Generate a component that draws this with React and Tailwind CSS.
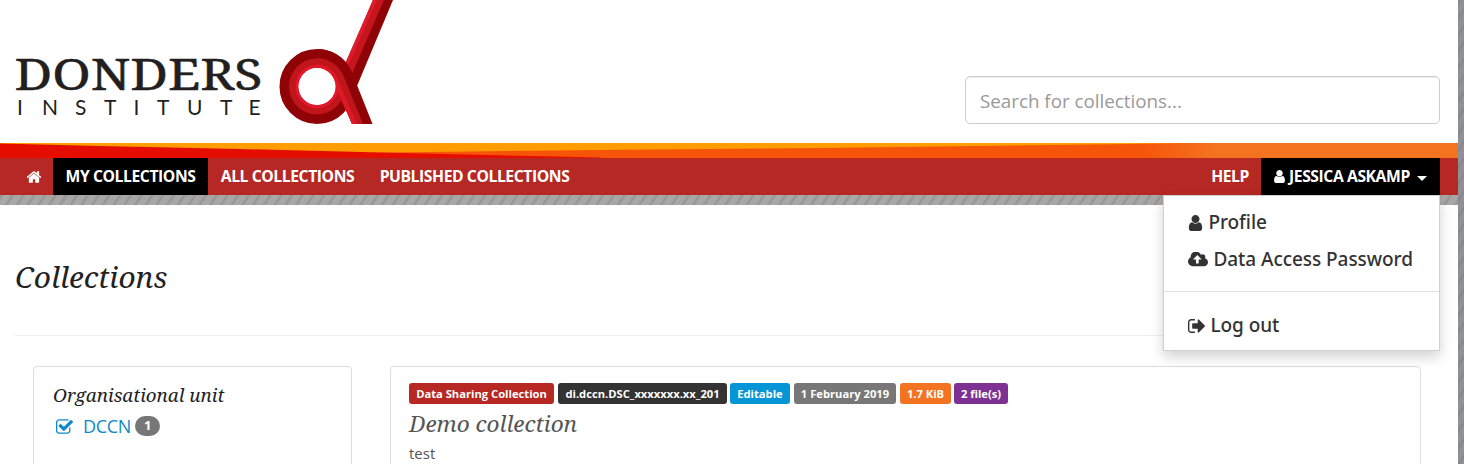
const iconPaths = {
  home: {
    box: '0 0 1792 1792',
    d: 'M1472 992v480q0 26-19 45t-45 19h-384v-384h-256v384h-384q-26 0-45-19t-19-45v-480q0-1 .5-3t.5-3l575-474 575 474q1 2 1 6zm223-69l-62 74q-8 9-21 11h-3q-13 0-21-7l-692-577-692 577q-12 8-24 7-13-2-21-11l-62-74q-8-10-7-23.5t11-21.5l719-599q32-26 76-26t76 26l244 204v-195q0-14 9-23t23-9h192q14 0 23 9t9 23v408l219 182q10 8 11 21.5t-7 23.5z',
  },
  user: {
    box: '256 128 1280 1536',
    d: 'M1536 1399q0 109-62.5 187t-150.5 78h-854q-88 0-150.5-78t-62.5-187q0-85 8.5-160.5t31.5-152 58.5-131 94-89 134.5-34.5q131 128 313 128t313-128q76 0 134.5 34.5t94 89 58.5 131 31.5 152 8.5 160.5zm-256-887q0 159-112.5 271.5t-271.5 112.5-271.5-112.5-112.5-271.5 112.5-271.5 271.5-112.5 271.5 112.5 112.5 271.5z',
  },
  upload: {
    box: '-64 256 1920 1280',
    d: 'M1216 864q0-14-9-23l-352-352q-9-9-23-9t-23 9l-351 351q-10 12-10 24 0 14 9 23t23 9h224v352q0 13 9.5 22.5t22.5 9.5h192q13 0 22.5-9.5t9.5-22.5v-352h224q13 0 22.5-9.5t9.5-22.5zm640 288q0 159-112.5 271.5t-271.5 112.5h-1088q-185 0-316.5-131.5t-131.5-316.5q0-130 70-240t188-165q-2-30-2-43 0-212 150-362t362-150q156 0 285.5 87t188.5 231q71-62 166-62 106 0 181 75t75 181q0 76-41 138 130 31 213.5 135.5t83.5 238.5z',
  },
  signOut: {
    box: '64 256 1568 1280',
    d: 'M704 1440q0 4 1 20t.5 26.5-3 23.5-10 19.5-20.5 6.5h-320q-119 0-203.5-84.5t-84.5-203.5v-704q0-119 84.5-203.5t203.5-84.5h320q13 0 22.5 9.5t9.5 22.5q0 4 1 20t.5 26.5-3 23.5-10 19.5-20.5 6.5h-320q-66 0-113 47t-47 113v704q0 66 47 113t113 47h312l11.5 1 11.5 3 8 5.5 7 9 2 13.5zm928-544q0 26-19 45l-544 544q-19 19-45 19t-45-19-19-45v-288h-448q-26 0-45-19t-19-45v-384q0-26 19-45t45-19h448v-288q0-26 19-45t45-19 45 19l544 544q19 19 19 45z',
  },
  check: {
    box: '64 128 1664 1408',
    d: 'M1472 930v318q0 119-84.5 203.5t-203.5 84.5h-832q-119 0-203.5-84.5t-84.5-203.5v-832q0-119 84.5-203.5t203.5-84.5h832q63 0 117 25 15 7 18 23 3 17-9 29l-49 49q-10 10-23 10-3 0-9-2-23-6-45-6h-832q-66 0-113 47t-47 113v832q0 66 47 113t113 47h832q66 0 113-47t47-113v-254q0-13 9-22l64-64q10-10 23-10 6 0 12 3 20 8 20 29zm231-489l-814 814q-24 24-57 24t-57-24l-430-430q-24-24-24-57t24-57l110-110q24-24 57-24t57 24l263 263 647-647q24-24 57-24t57 24l110 110q24 24 24 57t-24 57z',
  },
};

function Icon({ name, className }) {
  const icon = iconPaths[name];
  return (
    <svg viewBox={icon.box} fill="currentColor" className={className} aria-hidden="true">
      <path d={icon.d} />
    </svg>
  );
}

function Logo() {
  return (
    <svg width="400" height="130" viewBox="0 0 400 130" className="block">
      <g fill="#231f20">
        <text x="14.500" y="90" fontFamily="'Noto Serif', 'Liberation Serif', serif" fontSize="44" stroke="#231f20" strokeWidth="0.5" textLength="248" lengthAdjust="spacingAndGlyphs">DONDERS</text>
        <text fontFamily="Lato, sans-serif" fontSize="21" y="115" x="17 42 75 104 133.5 157 187 220 248.5">INSTITUTE</text>
      </g>
      <path d="M373 0H393L357 86L346 68Z" fill="#8f0306" />
      <path d="M373 0H384L351 76L345 64Z" fill="#c5161d" />
      <path d="M373 0H377L348 66L345 64Z" fill="#e01b2b" />
      <circle cx="317" cy="86.500" r="28" fill="none" stroke="#8f0306" strokeWidth="19" />
      <circle cx="317" cy="86.500" r="23.500" fill="none" stroke="#c0151b" strokeWidth="9" />
      <circle cx="317" cy="86.500" r="20" fill="none" stroke="#e5172d" strokeWidth="3" />
      <path d="M317 49A37.500 37.500 0 0 1 351 70L372.500 124H352L335 82Q330 68 317 67Z" fill="#8f0306" />
      <path d="M317 58Q336 59 344 77L363 124H352L335 85Q330 68 317 67Z" fill="#c0151b" />
      <path d="M317 64Q332 65 338 80L357 124H352L335 86Q330 68 317 68Z" fill="#df1828" />
      <circle cx="317" cy="86.500" r="18.500" fill="#fff" />
    </svg>
  );
}

function Band() {
  return (
    <svg width="1458" height="15" viewBox="0 0 1458 15" className="block shrink-0">
      <defs>
        <linearGradient id="fade">
          <stop offset="0" stopColor="#f47321" stopOpacity="0" />
          <stop offset="1" stopColor="#f47321" />
        </linearGradient>
      </defs>
      <rect width="1458" height="15" fill="#ff9c00" />
      <path d="M350 10L600 7L820 5L1130 1L1200 0H1458V15H350Z" fill="#f65408" />
      <path d="M0 .5L100 3L240 6L400 10L600 14.500V15H0Z" fill="#e40d00" />
      <rect x="1140" width="75" height="15" fill="url(#fade)" />
      <rect x="1215" width="243" height="15" fill="#f47321" />
    </svg>
  );
}

const tags = [
  ['Data Sharing Collection', 'w-[145px] bg-[#b72822]'],
  ['di.dccn.DSC_xxxxxxx.xx_201', 'w-[169px] bg-[#333333]'],
  ['Editable', 'w-[60px] bg-[#0695d5]'],
  ['1 February 2019', 'w-[102px] bg-[#777777]'],
  ['1.7 KiB', 'w-[51px] bg-[#f47321]'],
  ['2 file(s)', 'w-[54px] bg-[#7e3192]'],
];

const gaps = ['', 'ml-1', 'ml-[3px]', 'ml-1', 'ml-1', 'ml-[3px]'];

export default function App() {
  return (
    <div className="h-[464px] w-[1464px] overflow-hidden bg-[#a4a2a1] bg-[repeating-linear-gradient(123deg,#949393_0px,#a9a7a5_2px,#a9a7a5_7px,#949393_9px)] font-['Open_Sans',sans-serif] text-[#333]">
      <div className="flex h-full">
      <div className="flex h-full w-[1458px] shrink-0 flex-col">
        <header className="flex h-[143px] shrink-0 items-start justify-between bg-white pr-[18px]">
          <Logo />
          <input
            placeholder="Search for collections..."
            className="mt-[76px] h-12 w-[475px] rounded-[5px] border border-[#ccc] px-[14px] pt-[2px] text-[18.800px] shadow-[inset_0_1px_1px_rgba(0,0,0,0.075)] placeholder:text-[#999]"
          />
        </header>
        <Band />
        <nav className="flex h-[37px] shrink-0 items-center bg-[#b52823] pl-[14px] text-[15.700px] font-bold tracking-[-0.42px] text-white">
          <a className="flex h-full w-[39px] items-center justify-center"><Icon name="home" className="size-[16px]" /></a>
          <a className="flex h-full w-[155px] items-center justify-center whitespace-nowrap bg-black">MY COLLECTIONS</a>
          <a className="flex h-full w-[159px] items-center justify-center whitespace-nowrap">ALL COLLECTIONS</a>
          <a className="flex h-full w-[215px] items-center justify-center whitespace-nowrap">PUBLISHED COLLECTIONS</a>
          <a className="ml-auto flex h-full items-center px-[12px]">HELP</a>
          <div className="relative mr-[18px] h-full w-[179px] bg-black">
            <a className="flex h-full items-center whitespace-nowrap pl-[12px]">
              <Icon name="user" className="mr-[3px] h-[13px] w-[13px]" />
              JESSICA ASKAMP
              <span className="ml-[7px] mt-[3px] border-x-[5px] border-t-[5px] border-x-transparent border-t-white" />
            </a>
            <div className="absolute right-0 top-[37px] z-10 h-[156px] w-[277px] border border-[#d0d0d0] bg-white pt-[8px] font-['Noto_Sans',sans-serif] text-[19px] font-medium tracking-[-0.050px] text-[#333] shadow-[0_6px_12px_rgba(0,0,0,0.175)]">
              <a className="flex h-[37px] items-center gap-[5px] pl-[24.400px]"><Icon name="user" className="h-4 w-[15px]" />Profile</a>
              <a className="flex h-[37px] items-center gap-[5px] whitespace-nowrap pl-[24.400px]"><Icon name="upload" className="h-[15px] w-5" />Data Access Password</a>
              <div className="mb-[15px] mt-[13px] h-px bg-[#e0e0e0]" />
              <a className="flex h-[37px] items-center gap-[5px] pl-[24.400px]"><Icon name="signOut" className="h-[14px] w-[17px]" />Log out</a>
            </div>
          </div>
        </nav>
        <main className="mt-[10px] flex-1 bg-white pl-[15px] pr-[18px]">
          <h1 className="flex h-[131px] items-center border-b border-[#eee] pt-[14px] font-['Noto_Serif',serif] text-[29.900px] italic text-[#222]">Collections</h1>
          <div className="flex items-start gap-[38px] pl-[18px] pr-[19px] pt-[30px]">
            <aside className="h-[120px] w-[319px] rounded-[4px] border border-[#ddd] pl-[19px] pt-[14px]">
              <h2 className="font-['Noto_Serif',serif] text-[18.800px] italic leading-[28px] text-[#222]">Organisational unit</h2>
              <div className="mt-[3px] flex h-[28px] items-center text-[18px] text-[#1088c9]">
                <Icon name="check" className="ml-[3px] mr-[10px] h-[15px] w-[17px]" />
                <span className="tracking-[-0.3px]">DCCN</span>
                <span className="ml-1 flex h-5 w-[25px] items-center justify-center rounded-[10px] bg-[#777] text-[13px] font-bold text-white">1</span>
              </div>
            </aside>
            <section className="h-[120px] flex-1 rounded-[4px] border border-[#ddd] pl-[18px] pt-4">
              <div className="flex text-[11.200px] font-bold text-white">
                {tags.map(([label, style], i) => (
                  <span key={label} className={`${gaps[i]} ${style} flex h-[21px] items-center justify-center whitespace-nowrap rounded-[3px] pt-px`}>{label}</span>
                ))}
              </div>
              <h2 className="mt-[3px] font-['Noto_Serif',serif] text-[22.600px] italic leading-[34px] text-[#555]">Demo collection</h2>
              <p className="mt-px text-[15px] leading-[22px] text-[#555]">test</p>
            </section>
          </div>
        </main>
      </div>
      <div className="flex-1 bg-[#687080]/40" />
      </div>
    </div>
  );
}
